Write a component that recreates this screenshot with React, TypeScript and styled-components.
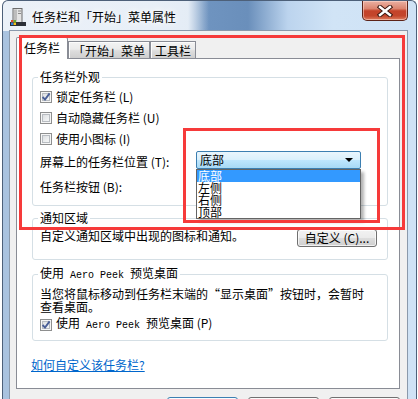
import React from 'react';
import styled, { createGlobalStyle } from 'styled-components';

const Global = createGlobalStyle`
  html, body { margin: 0; padding: 0; background: #ffffff; }
  body {
    font-family: "Noto Sans CJK SC", "Liberation Sans", sans-serif;
    font-size: 12px;
    color: #000;
  }
  * { box-sizing: border-box; }
`;

const Stage = styled.div`
  position: relative;
  width: 418px;
  height: 399px;
  overflow: hidden;
  background: #ffffff;
`;

const Frame = styled.div`
  margin-left: 2px;
  width: 415px;
  height: 420px;
  border: 1px solid #4d6079;
  border-bottom: none;
  border-radius: 6px 6px 0 0;
  padding: 0 8px 0 6px;
  display: flex;
  flex-direction: column;
  background:
    linear-gradient(90deg, rgba(238, 243, 249, 0.96) 0, rgba(236, 242, 249, 0.93) 185px, rgba(236, 242, 249, 0) 206px) top left / 100% 30px no-repeat,
    linear-gradient(90deg, #aac3df 0px, #a6c0dd 150px, #6f94c0 200px, #6a8fbb 245px, #bcd4ee 285px, #d1e4f6 330px, #cfe2f5 100%);
`;

const TitleBar = styled.div`
  height: 29px;
  display: flex;
  align-items: center;
  flex: none;
`;

const TitleIcon = styled.svg`
  width: 16px;
  height: 18px;
  margin-left: 1px;
  margin-top: 2px;
  flex: none;
`;

const TitleText = styled.span`
  margin-left: 6px;
  margin-top: 3px;
  font-size: 12px;
  line-height: 14px;
  color: #000;
  text-shadow: 0 0 6px #fff, 0 0 10px #fff;
`;

const CloseButton = styled.div`
  margin-left: auto;
  align-self: flex-start;
  width: 46px;
  height: 20px;
  border: 1px solid #5c2318;
  border-top: none;
  border-radius: 0 0 5px 5px;
  background: linear-gradient(180deg, #eab0a2 0%, #dc8570 40%, #c4432a 52%, #c3452b 78%, #de7d5f 100%);
  box-shadow: inset 0 0 0 1px rgba(255, 220, 210, 0.55);
  display: flex;
  align-items: center;
  justify-content: center;
`;

const Client = styled.div`
  flex: 1;
  border: 1px solid #8a99ab;
  background: #f0f0f0;
  padding: 6px 7px 0 6px;
  display: flex;
  flex-direction: column;
`;

const TabStrip = styled.div`
  display: flex;
  align-items: flex-end;
  height: 22px;
  margin-bottom: -1px;
  position: relative;
  z-index: 1;
`;

const Tab = styled.div<{ $active?: boolean; $w: number }>`
  width: ${(p) => p.$w}px;
  height: ${(p) => (p.$active ? 22 : 17)}px;
  margin-bottom: ${(p) => (p.$active ? 0 : 1)}px;
  border: 1px solid #898c95;
  border-bottom: none;
  line-height: 14px;
  font-size: 12px;
  white-space: nowrap;
  ${(p) =>
    p.$active
      ? `background: #ffffff; padding: 3px 0 0 7px; border-radius: 2px 2px 0 0;`
      : `background: linear-gradient(180deg, #f3f3f3 0%, #ebebeb 45%, #dddddd 55%, #cfcfcf 100%);
         padding-top: 2px; text-align: center; box-shadow: inset 1px 1px 0 #fcfcfc;`}
`;

const Panel = styled.div`
  height: 331px;
  flex: none;
  border: 1px solid #898c95;
  background: #ffffff;
  padding: 11px 11px 0 15px;
  display: flex;
  flex-direction: column;
`;

const Group = styled.fieldset<{ $mt: number; $pt: number; $pb: number; $pr?: number }>`
  margin: ${(p) => p.$mt}px 0 0 0;
  padding: ${(p) => p.$pt}px ${(p) => p.$pr ?? 7}px ${(p) => p.$pb}px 7px;
  border: 1px solid #d5dfe5;
  border-radius: 3px;
  min-inline-size: auto;
`;

const Legend = styled.legend`
  padding: 0 2px;
  margin-left: -2px;
  font-size: 12px;
  line-height: 14px;
`;

const Mono = styled.span`
  font-family: "Liberation Mono", "DejaVu Sans Mono", monospace;
  font-size: 10px;
  white-space: pre;
`;

const CheckRow = styled.div<{ $h: number }>`
  height: ${(p) => p.$h}px;
  display: flex;
  align-items: center;
  gap: 4px;
  line-height: 14px;
`;

const Box = styled.span`
  width: 12px;
  height: 12px;
  flex: none;
  border: 1px solid #8e8f8f;
  background: linear-gradient(135deg, #d4d6d9 0%, #eef0f1 60%, #fbfbfb 100%);
  box-shadow: inset 0 0 0 1px #f6f6f6, inset 0 0 0 2px #b8bcc1;
  display: flex;
  align-items: center;
  justify-content: center;
`;

const FieldRow = styled.div<{ $h: number; $pt: number }>`
  height: ${(p) => p.$h}px;
  display: grid;
  grid-template-columns: 156px 165px;
  align-items: start;
  line-height: 14px;
  padding-top: ${(p) => p.$pt}px;
`;

const ComboWrap = styled.div`
  position: relative;
  margin-top: -4px;
`;

const Combo = styled.div`
  height: 18px;
  border: 1px solid #3c7fb1;
  border-radius: 2px;
  background: linear-gradient(180deg, #eaf6fd 0%, #d9f0fc 48%, #bee6fd 52%, #a7d9f5 100%);
  display: flex;
  align-items: center;
  padding: 0 4px 0 3px;
  line-height: 14px;
`;

const ComboArrow = styled.svg`
  margin-left: auto;
  margin-right: 3px;
`;

const DropList = styled.div`
  position: absolute;
  top: 100%;
  left: 0;
  width: 165px;
  border: 1px solid #646464;
  background: #ffffff;
  box-shadow: 3px 3px 3px rgba(0, 0, 0, 0.3);
  z-index: 5;
`;

const DropItem = styled.div<{ $sel?: boolean }>`
  height: 12px;
  line-height: 12px;
  font-size: 12px;
  padding-left: 1px;
  background: ${(p) => (p.$sel ? '#3399ff' : 'transparent')};
  color: ${(p) => (p.$sel ? '#ffffff' : '#000000')};
`;

const NotifyRow = styled.div`
  display: flex;
  justify-content: space-between;
  align-items: flex-start;
  line-height: 14px;
`;

const PushButton = styled.div<{ $w: number; $default?: boolean }>`
  width: ${(p) => p.$w}px;
  height: 18px;
  border: 1px solid ${(p) => (p.$default ? '#3c7fb1' : '#707070')};
  border-radius: 3px;
  background: ${(p) =>
    p.$default
      ? 'linear-gradient(180deg, #eaf6fd 0%, #d9f0fc 48%, #bee6fd 52%, #a7d9f5 100%)'
      : 'linear-gradient(180deg, #f2f2f2 0%, #ebebeb 48%, #dddddd 52%, #cfcfcf 100%)'};
  box-shadow: inset 0 0 0 1px rgba(255, 255, 255, 0.7);
  display: flex;
  align-items: center;
  justify-content: center;
  line-height: 14px;
  white-space: nowrap;
  flex: none;
`;

const Paragraph = styled.div`
  line-height: 13px;
`;

const HelpLink = styled.a`
  margin: 17px 0 0 -1px;
  line-height: 14px;
  color: #0066cc;
  text-decoration: underline;
  align-self: flex-start;
`;

const ButtonBar = styled.div`
  display: flex;
  justify-content: flex-end;
  gap: 10px;
  margin-top: 8px;
`;

const DialogButton = styled(PushButton)`
  height: 23px;
`;

const RedMark = styled.div<{ $x: number; $y: number; $w: number; $h: number }>`
  position: absolute;
  left: ${(p) => p.$x}px;
  top: ${(p) => p.$y}px;
  width: ${(p) => p.$w}px;
  height: ${(p) => p.$h}px;
  border: 3px solid #f63a3a;
  z-index: 10;
  pointer-events: none;
`;

const Check = () => (
  <svg width="10" height="10" viewBox="0 0 10 10">
    <path d="M1.6 5 L4 7.6 L8.6 1.4" fill="none" stroke="#4a5f97" strokeWidth="1.9" />
  </svg>
);

const CheckBox = ({ checked }: { checked?: boolean }) => <Box>{checked ? <Check /> : null}</Box>;

const AppIcon = () => (
  <TitleIcon viewBox="0 0 16 18">
    <rect x="3" y="0.5" width="9" height="14" fill="#e4e4e4" stroke="#6b6b6b" />
    <rect x="4" y="1.5" width="3" height="12" fill="#bdbdbd" />
    <rect x="8" y="2.5" width="3" height="1" fill="#8a8a8a" />
    <rect x="8" y="5" width="3" height="1" fill="#8a8a8a" />
    <rect x="0" y="14" width="16" height="4" fill="#2b2f36" />
    <rect x="1" y="12" width="2.4" height="2.4" fill="#e2492f" />
    <rect x="3.6" y="12" width="2.4" height="2.4" fill="#5fb030" />
    <rect x="1" y="14.6" width="2.4" height="2.4" fill="#2f7ed8" />
    <rect x="3.6" y="14.6" width="2.4" height="2.4" fill="#f3c21b" />
  </TitleIcon>
);

const CloseGlyph = () => (
  <svg width="16" height="12" viewBox="0 0 16 12">
    <path d="M3 2 L13 10 M13 2 L3 10" stroke="#3b1710" strokeWidth="4.4" strokeLinecap="square" />
    <path d="M3 2 L13 10 M13 2 L3 10" stroke="#ffffff" strokeWidth="2.4" strokeLinecap="square" />
  </svg>
);

export default function App() {
  return (
    <Stage>
      <Global />
      <Frame>
        <TitleBar>
          <AppIcon />
          <TitleText>任务栏和「开始」菜单属性</TitleText>
          <CloseButton>
            <CloseGlyph />
          </CloseButton>
        </TitleBar>
        <Client>
          <TabStrip>
            <Tab $active $w={52}>任务栏</Tab>
            <Tab $w={82}>「开始」菜单</Tab>
            <Tab $w={46}>工具栏</Tab>
          </TabStrip>
          <Panel>
            <Group $mt={0} $pt={2} $pb={5}>
              <Legend>任务栏外观</Legend>
              <CheckRow $h={21}>
                <CheckBox checked />
                <span>锁定任务栏 (L)</span>
              </CheckRow>
              <CheckRow $h={21}>
                <CheckBox />
                <span>自动隐藏任务栏 (U)</span>
              </CheckRow>
              <CheckRow $h={22}>
                <CheckBox />
                <span>使用小图标 (I)</span>
              </CheckRow>
              <FieldRow $h={24} $pt={5}>
                <span>屏幕上的任务栏位置 (T):</span>
                <ComboWrap>
                  <Combo>
                    <span>底部</span>
                    <ComboArrow width="8" height="4" viewBox="0 0 8 4">
                      <path d="M0 0 H8 L4 4 Z" fill="#000" />
                    </ComboArrow>
                  </Combo>
                  <DropList>
                    <DropItem $sel>底部</DropItem>
                    <DropItem>左侧</DropItem>
                    <DropItem>右侧</DropItem>
                    <DropItem>顶部</DropItem>
                  </DropList>
                </ComboWrap>
              </FieldRow>
              <FieldRow $h={26} $pt={6}>
                <span>任务栏按钮 (B):</span>
              </FieldRow>
            </Group>

            <Group $mt={5} $pt={4} $pb={12} $pr={10}>
              <Legend>通知区域</Legend>
              <NotifyRow>
                <span>自定义通知区域中出现的图标和通知。</span>
                <PushButton $w={80}>自定义 (C)...</PushButton>
              </NotifyRow>
            </Group>

            <Group $mt={6} $pt={4} $pb={4}>
              <Legend>
                使用<Mono> Aero Peek </Mono>预览桌面
              </Legend>
              <Paragraph>
                当您将鼠标移动到任务栏末端的“显示桌面”按钮时，会暂时
                <br />
                查看桌面。
              </Paragraph>
              <CheckRow $h={23}>
                <CheckBox checked />
                <span>
                  使用<Mono> Aero Peek </Mono>预览桌面 (P)
                </span>
              </CheckRow>
            </Group>

            <HelpLink>如何自定义该任务栏?</HelpLink>
          </Panel>
          <ButtonBar>
            <DialogButton $w={71} $default />
            <DialogButton $w={71} />
            <DialogButton $w={71} />
          </ButtonBar>
        </Client>
      </Frame>
      <RedMark $x={19} $y={35} $w={386} $h={195} />
      <RedMark $x={183} $y={128} $w={197} $h={95} />
    </Stage>
  );
}
